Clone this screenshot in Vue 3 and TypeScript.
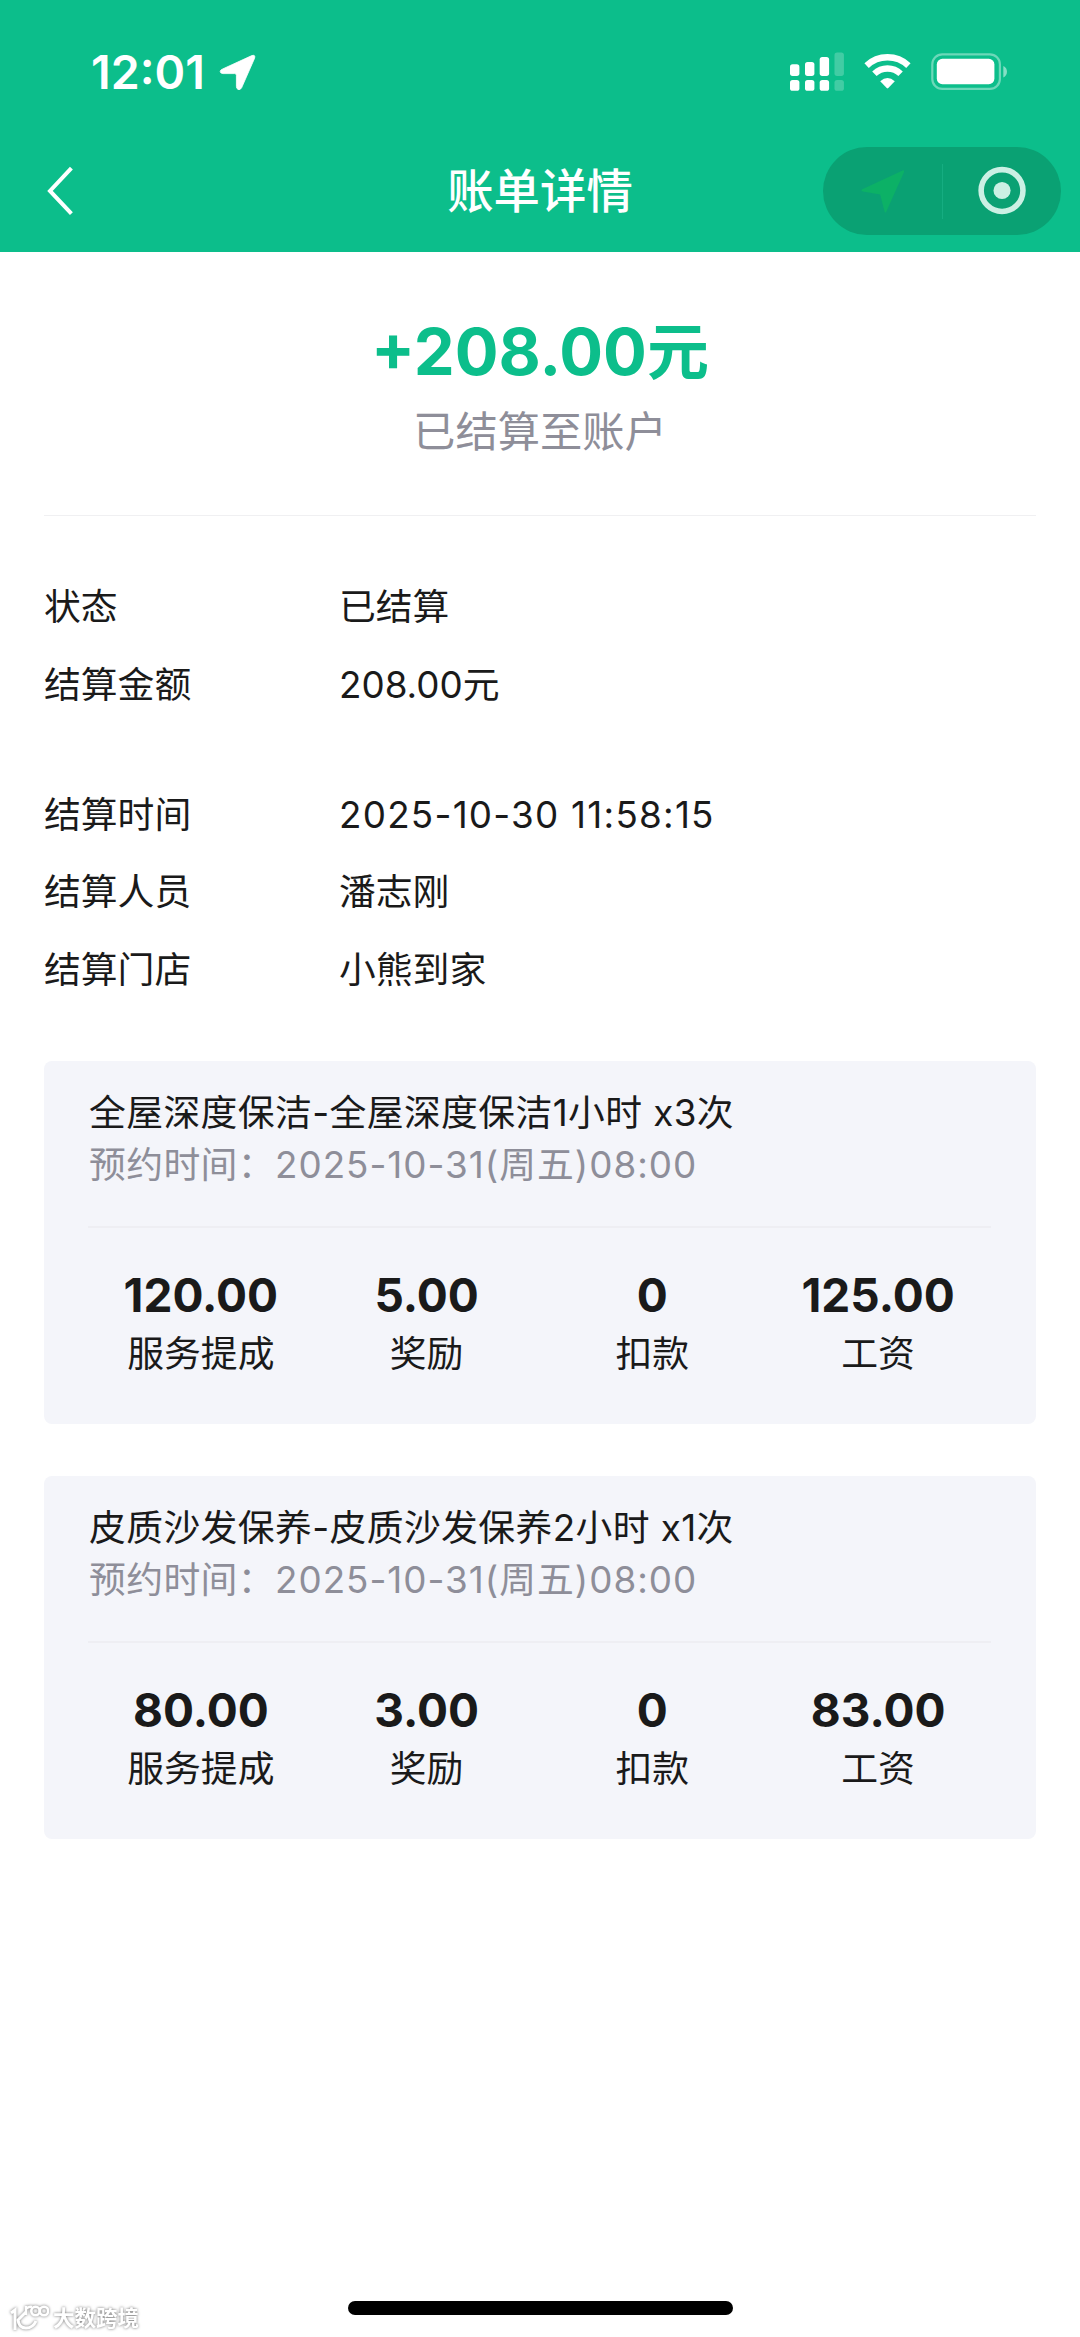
<script setup lang="ts">
interface Row {
  label: string
  value: string
  timestamp?: boolean
}

interface Stat {
  amount: string
  label: string
}

interface Order {
  title: string
  time: string
  stats: Stat[]
}

const groups: Row[][] = [
  [
    { label: '状态', value: '已结算' },
    { label: '结算金额', value: '208.00元' },
  ],
  [
    { label: '结算时间', value: '2025-10-30 11:58:15', timestamp: true },
    { label: '结算人员', value: '潘志刚' },
    { label: '结算门店', value: '小熊到家' },
  ],
]

function stats(commission: string, bonus: string, deduction: string, wage: string): Stat[] {
  return [
    { amount: commission, label: '服务提成' },
    { amount: bonus, label: '奖励' },
    { amount: deduction, label: '扣款' },
    { amount: wage, label: '工资' },
  ]
}

const orders: Order[] = [
  {
    title: '全屋深度保洁-全屋深度保洁1小时 x3次',
    time: '2025-10-31(周五)08:00',
    stats: stats('120.00', '5.00', '0', '125.00'),
  },
  {
    title: '皮质沙发保养-皮质沙发保养2小时 x1次',
    time: '2025-10-31(周五)08:00',
    stats: stats('80.00', '3.00', '0', '83.00'),
  },
]
</script>

<template>
  <div class="screen">
    <header class="header">
      <div class="status-bar">
        <div class="clock">
          <span class="clock-time">12:01</span>
          <svg class="location" width="38" height="38" viewBox="0 0 38 38">
            <path d="M3.6 16 32.8 2.6Q36.6 1.4 35.6 5.2L22.6 34.8Q21.2 37.4 19 36.4 17.4 35.6 17.4 33.4V22.2Q17.4 20.6 15.8 20.6H4Q1.2 20.4 1.2 18.4 1.4 16.8 3.6 16Z" fill="#fff" stroke="#fff" stroke-width="0.8" />
          </svg>
        </div>
        <svg class="indicators" width="220" height="40" viewBox="0 0 220 40">
          <g fill="#fff">
            <rect x="2" y="12.3" width="9.4" height="11.6" rx="2.6" />
            <rect x="17" y="10" width="9.4" height="13.9" rx="2.6" />
            <rect x="31.7" y="5" width="9.4" height="18.9" rx="2.6" />
            <rect x="2" y="28" width="9.4" height="10.8" rx="2.6" />
            <rect x="17" y="28" width="9.4" height="10.8" rx="2.6" />
            <rect x="31.7" y="28" width="9.4" height="10.8" rx="2.6" />
            <g opacity="0.22">
              <rect x="46.5" y="0.5" width="9.4" height="23.4" rx="2.6" />
              <rect x="46.5" y="28" width="9.4" height="10.8" rx="2.6" />
            </g>
          </g>
          <g fill="none" stroke="#fff" stroke-width="6.4">
            <path d="M78.6 13.6A30.5 30.5 0 0 1 120.4 13.6" />
            <path d="M86.4 21.8A19 19 0 0 1 112.6 21.8" />
          </g>
          <path d="M92.2 29.2Q99.5 22.6 106.8 29.2L100.3 36.1Q99.5 36.9 98.7 36.1Z" fill="#fff" />
          <rect x="144.3" y="2.3" width="67.6" height="34.6" rx="10" fill="none" stroke="#fff" stroke-opacity="0.4" stroke-width="2.2" />
          <rect x="148.8" y="6.8" width="57.6" height="25.4" rx="5.6" fill="#fff" />
          <path d="M215.3 14V25.4Q219 23.6 219 19.7 219 15.8 215.3 14Z" fill="#fff" fill-opacity="0.5" />
        </svg>
      </div>
      <nav class="nav">
        <svg class="back" width="28" height="50" viewBox="0 0 28 50">
          <path d="M25.4 2.2 4 25 25.4 47.6" fill="none" stroke="#fff" stroke-width="4" />
        </svg>
        <h1 class="nav-title">账单详情</h1>
        <div class="capsule">
          <svg class="capsule-half" width="119" height="88" viewBox="0 0 119 88">
            <path d="M39.4 42.2 80 23.4Q81.8 22.8 81.4 25L63.4 65Q62.2 66.6 61.8 64.6L57.4 47.4 40 44.4Q37.6 43.6 39.4 42.2Z" fill="#0cb166" />
          </svg>
          <span class="capsule-line"></span>
          <svg class="capsule-half" width="119" height="88" viewBox="0 0 119 88">
            <circle cx="59.3" cy="43.5" r="21" fill="none" stroke="#cbf0e4" stroke-width="5.6" />
            <circle cx="59.3" cy="43.5" r="8.6" fill="#cbf0e4" />
          </svg>
        </div>
      </nav>
    </header>

    <main class="content">
      <section class="summary">
        <p class="total">+208.00<span class="unit">元</span></p>
        <p class="total-note">已结算至账户</p>
      </section>

      <dl v-for="(rows, i) in groups" :key="i" class="group">
        <div v-for="row in rows" :key="row.label" class="row">
          <dt>{{ row.label }}</dt>
          <dd :class="{ timestamp: row.timestamp }">{{ row.value }}</dd>
        </div>
      </dl>

      <section class="orders">
        <article v-for="order in orders" :key="order.title" class="card">
          <div class="card-head">
            <h2 class="card-title">{{ order.title }}</h2>
            <p class="card-time">预约时间：<span class="card-date">{{ order.time }}</span></p>
          </div>
          <ul class="stats">
            <li v-for="stat in order.stats" :key="stat.label" class="stat">
              <strong>{{ stat.amount }}</strong>
              <span>{{ stat.label }}</span>
            </li>
          </ul>
        </article>
      </section>
    </main>

    <footer class="footer">
      <div class="watermark">
        <svg width="42" height="32" viewBox="0 0 42 32">
          <g fill="none" stroke="#fff" stroke-width="3">
            <path d="M4 11 8 8V28" />
            <path d="M19 10 11 18Q12 26 19 26 26 26 29 19" />
            <path d="M19 4V13M19 7Q22 4 25 5" stroke-width="2.4" />
            <circle cx="28.5" cy="9" r="4.2" stroke-width="2.6" />
            <circle cx="37" cy="9" r="4.2" stroke-width="2.6" />
          </g>
        </svg>
        <span>大数跨境</span>
      </div>
      <div class="home-bar"></div>
    </footer>
  </div>
</template>

<style>
body {
  margin: 0;
  background: #fff;
}
</style>

<style scoped>
.screen {
  display: flex;
  flex-direction: column;
  width: 1080px;
  height: 2337px;
  overflow: hidden;
  background: #fff;
  color: #1a1a1a;
  font-family: Inter, 'Noto Sans CJK SC', sans-serif;
  font-size: 36.8px;
}

h1,
h2,
p,
dl,
dd,
ul {
  margin: 0;
  padding: 0;
  font-weight: 400;
}

.header {
  box-sizing: border-box;
  height: 252px;
  background: #0cbe8b;
  color: #fff;
}

.status-bar {
  display: flex;
  justify-content: space-between;
  align-items: center;
  height: 144px;
  padding: 0 72px 0 91px;
}

.clock {
  display: flex;
  align-items: center;
  gap: 14px;
}

.clock-time {
  font-size: 46.5px;
  font-weight: 600;
  line-height: 56px;
}

.nav {
  display: flex;
  align-items: center;
  justify-content: space-between;
  height: 94px;
  padding: 0 19px 0 46px;
}

.back {
  width: 28px;
  margin-right: 183px;
}

.nav-title {
  font-size: 46.4px;
  font-weight: 500;
  line-height: 60px;
}

.capsule {
  display: flex;
  align-items: center;
  width: 238px;
  height: 88px;
  border-radius: 44px;
  background: #0aa173;
}

.capsule-half {
  flex: 1;
  min-width: 0;
}

.capsule-line {
  width: 1px;
  height: 55px;
  background: #16ad81;
}

.content {
  flex: 1;
  padding: 0 44px;
}

.summary {
  display: flex;
  flex-direction: column;
  align-items: center;
  height: 264px;
  box-sizing: border-box;
  padding-top: 61px;
  border-bottom: 1.5px solid #f0f0f2;
  margin-bottom: 52px;
}

.total {
  color: #0cbe8b;
  font-size: 65px;
  font-weight: 700;
  line-height: 78px;
}

.unit {
  font-size: 62px;
}

.total-note {
  margin-top: 12px;
  color: #8e8e99;
  font-size: 42.3px;
  line-height: 56px;
}

.group {
  margin-bottom: 52px;
}

.row {
  display: flex;
  height: 77.8px;
  line-height: 77.8px;
}

.row dt {
  width: 295px;
}

.timestamp {
  letter-spacing: 1.25px;
}

.orders {
  display: flex;
  flex-direction: column;
  gap: 52px;
}

.card {
  box-sizing: border-box;
  height: 363px;
  padding: 26px 45px 0 44px;
  border-radius: 8px;
  background: #f4f5fa;
}

.card-head {
  box-sizing: border-box;
  height: 141px;
  border-bottom: 2px solid #eeeef3;
}

.card-title {
  padding-left: 1px;
  font-size: 36.8px;
  letter-spacing: 0.4px;
  line-height: 52px;
}

.card-time {
  padding-left: 1px;
  color: #8e8e99;
  letter-spacing: 0.4px;
  line-height: 52px;
}

.card-date {
  letter-spacing: 1px;
}

.stats {
  display: flex;
  padding-top: 39px;
  list-style: none;
}

.stat {
  display: flex;
  flex: 1;
  flex-direction: column;
  align-items: center;
}

.stat strong {
  font-size: 46px;
  font-weight: 700;
  line-height: 56px;
}

.stat span {
  margin-top: 5px;
  line-height: 52px;
}

.footer {
  position: relative;
  height: 36px;
}

.watermark {
  position: absolute;
  left: 7px;
  bottom: 3px;
  display: flex;
  align-items: center;
  gap: 4px;
  color: #fff;
  font-size: 21.5px;
  font-weight: 700;
  line-height: 32px;
  filter: drop-shadow(0 0 1.5px rgba(0, 0, 0, 0.55));
}

.home-bar {
  width: 385px;
  height: 13.5px;
  margin: 0 auto;
  border-radius: 7px;
  background: #000;
}
</style>
